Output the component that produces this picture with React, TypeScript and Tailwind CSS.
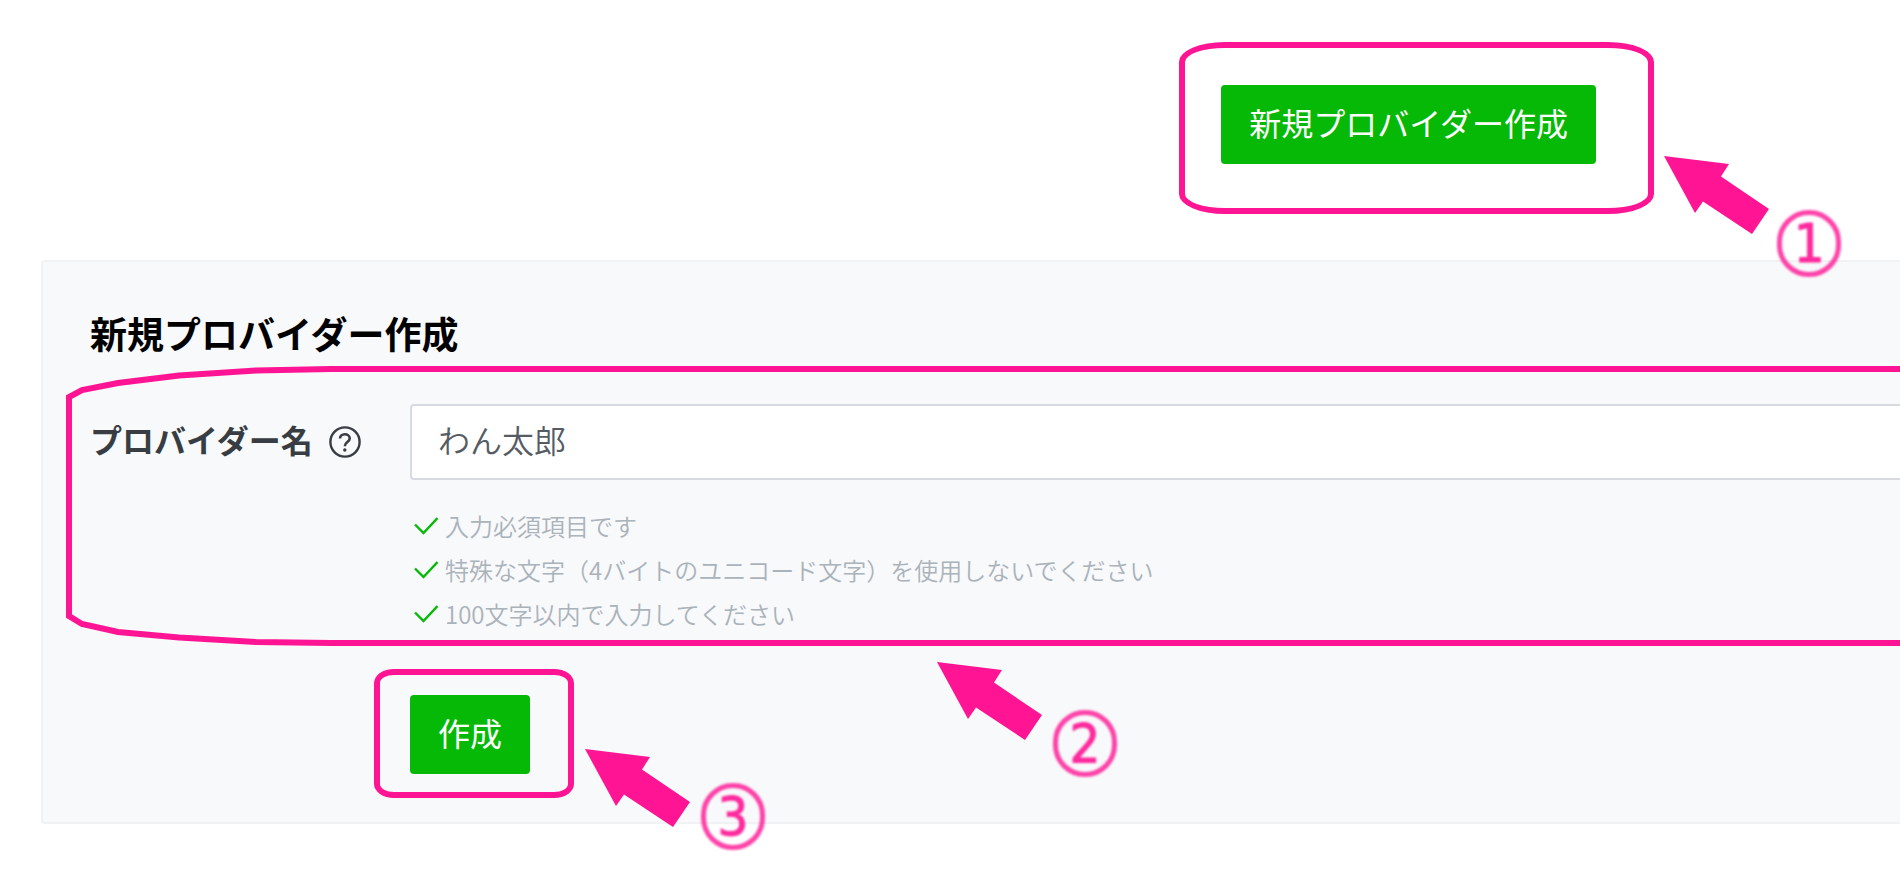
import React from 'react'

const hints = [
  '入力必須項目です',
  '特殊な文字（4バイトのユニコード文字）を使用しないでください',
  '100文字以内で入力してください'
]

function Callout({ step, className, stepClassName }: { step: string, className: string, stepClassName: string }) {
  return (
    <div className={`pointer-events-none absolute flex w-max items-start ${className}`}>
      <svg className="h-[78px] w-[106px] fill-[#ff1493]" viewBox="0 0 106 78" aria-hidden="true">
        <path d="M0 0 65 8 57 20.5 105 53 88 78 39 45.5 31 57Z" />
      </svg>
      <span className={`flex h-[67px] w-16 items-center justify-center rounded-full border-[5px] border-[#ff1493]/80 font-['DejaVu_Sans_Condensed','DejaVu_Sans',sans-serif] text-[54px] leading-none text-[#ff1493]/90 blur-[1px] [-webkit-text-stroke:1px] ${stepClassName}`}>{step}</span>
    </div>
  )
}

function Check() {
  return (
    <svg className="h-6 w-6 shrink-0" viewBox="0 0 24 24" fill="none" stroke="#06b906" strokeWidth="2.4" aria-hidden="true">
      <path d="M1 10.500 9.500 19 23.500 4" />
    </svg>
  )
}

function HelpIcon() {
  return (
    <svg className="h-8 w-8" viewBox="0 0 32 32" fill="none" stroke="#373d42" strokeWidth="2.4" aria-hidden="true">
      <circle cx="16" cy="16" r="14.600" />
      <path d="M11 12.600c0-2.600 2-4.300 4.800-4.300s4.900 1.700 4.900 4.100c0 3.700-4.900 3.700-4.900 7.800" strokeWidth="2.600" />
      <circle cx="15.800" cy="24" r="1.700" fill="#373d42" stroke="none" />
    </svg>
  )
}

function App() {
  return (
    <main className="min-h-screen overflow-hidden bg-white pb-[60px] font-['Roboto','Noto_Sans_CJK_JP',sans-serif]">
      <header className="flex justify-end pt-[85px] pr-[304px]">
        <div className="relative z-10">
          <button type="button" className="rounded bg-[#06b906] px-7 pt-[17px] pb-[15px] text-[32px] leading-[47px] text-white">新規プロバイダー作成</button>
          <div className="pointer-events-none absolute -top-[43px] -right-[58px] -bottom-[50px] -left-[42px] rounded-[46px/20px] border-[6px] border-[#ff1493]" />
          <Callout step="1" className="top-[71px] left-[443px] gap-[7px]" stepClassName="mt-[54px]" />
        </div>
      </header>

      <section className="relative mt-24 ml-[41px] rounded-l border-2 border-r-0 border-[#f1f2f4] bg-[#f8f9fb] pt-12 pb-12 pl-[47px]">
        <h1 className="text-[37px] leading-[54px] font-bold text-black">新規プロバイダー作成</h1>

        <form onSubmit={e => e.preventDefault()}>
          <div className="mt-10 flex">
            <div className="flex h-[76px] w-[320px] shrink-0 items-center gap-4">
              <label htmlFor="provider" className="text-[32px] leading-[48px] font-bold text-[#373d42]">プロバイダー名</label>
              <button type="button" aria-label="ヘルプ"><HelpIcon /></button>
            </div>
            <div className="min-w-0 grow">
              <input id="provider" type="text" defaultValue="わん太郎"
                className="h-[76px] w-full rounded-l border-2 border-r-0 border-[#d7dae0] bg-white px-[26px] pb-[6px] text-[32px] font-[350] text-[#555c64] outline-none" />
              <ul className="mt-6 mb-[59px] ml-1 font-['Noto_Sans_CJK_JP',sans-serif]">
                {
                  hints.map(hint => (
                    <li key={hint} className="flex h-11 items-center gap-[7px] text-2xl font-[350] text-[#aab2ba]">
                      <Check />
                      {hint}
                    </li>
                  ))
                }
              </ul>
            </div>
          </div>

          <div className="ml-[320px] flex">
            <div className="relative">
              <button type="submit" className="rounded bg-[#06b906] px-7 pt-[17px] pb-[15px] text-[32px] leading-[47px] text-white">作成</button>
              <div className="pointer-events-none absolute -top-[26px] -right-11 -bottom-6 -left-9 rounded-[20px/14px] border-[6px] border-[#ff1493]" />
              <Callout step="3" className="top-[54px] left-[175px] gap-[10px]" stepClassName="mt-[34px]" />
            </div>
          </div>
        </form>

        {/* hand drawn frame around the field, runs off the right side */}
        <svg className="pointer-events-none absolute top-[104px] left-[23px] h-[280px] w-[calc(100%-23px)]" fill="none" stroke="#ff1493" strokeWidth="6" aria-hidden="true">
          <path d="M6000 3H265L190 4.500 113 9.500 52 17 16 24 3 31V250L16 258 52 266 113 271.500 190 276 265 277H6000" />
        </svg>
        <Callout step="2" className="top-[400px] left-[894px] gap-[10px]" stepClassName="mt-12" />
      </section>
    </main>
  )
}

export default App
